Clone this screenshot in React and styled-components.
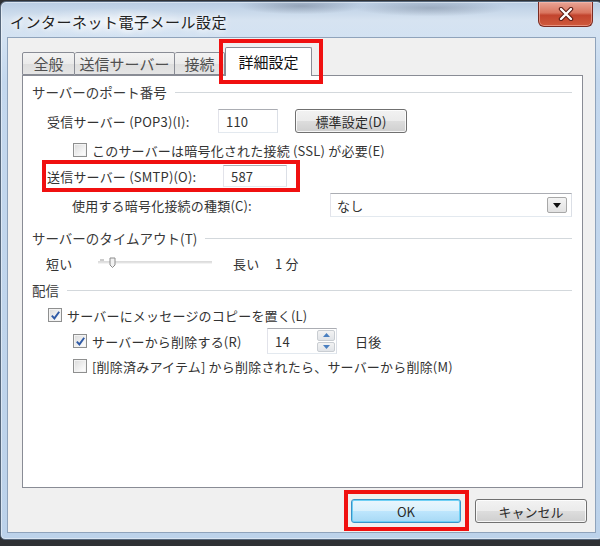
import styled, { createGlobalStyle } from "styled-components";

const GlobalStyle = createGlobalStyle`
  html, body {
    margin: 0;
    padding: 0;
    background: #2f3134;
  }
  body {
    width: 600px;
    height: 546px;
    overflow: hidden;
    font-family: "Noto Sans CJK JP", "Noto Sans", sans-serif;
    color: #333;
  }
`;

const WindowFrame = styled.div`
  box-sizing: border-box;
  width: 603px;
  height: 539px;
  margin-top: 1px;
  border: 1px solid #56677b;
  border-radius: 6px 6px 5px 5px;
  padding: 0 6px 6px 6px;
  display: flex;
  flex-direction: column;
  background:
    radial-gradient(ellipse 90px 12px at 300px 4px, rgba(70, 80, 100, 0.35), transparent 70%),
    radial-gradient(ellipse 110px 12px at 430px 6px, rgba(70, 80, 100, 0.3), transparent 70%),
    radial-gradient(ellipse 140px 20px at 110px 20px, rgba(255, 255, 255, 0.6), transparent 70%),
    linear-gradient(to bottom, #b8cce2 0, #d6e3f1 18px, #d3e2f2 36px, #c4d8ee 80px, #bcd2ea 100%);
  box-shadow: inset 0 0 0 1px rgba(255, 255, 255, 0.45);
`;

const TitleBar = styled.div`
  height: 35px;
  display: flex;
  align-items: flex-start;
  justify-content: space-between;
`;

const Title = styled.div`
  margin: 10px 0 0 3px;
  font-size: 15px;
  letter-spacing: 0.5px;
  line-height: 20px;
  color: #222;
  text-shadow: 0 0 6px #fff, 0 0 10px #fff;
`;

const CloseButton = styled.div`
  width: 55px;
  height: 25px;
  margin-right: 3px;
  box-sizing: border-box;
  border: 1px solid #7a2b22;
  border-top: none;
  border-radius: 0 0 6px 6px;
  background: linear-gradient(to bottom, #e9a596 0, #d9755f 45%, #c2442e 55%, #cf5a3c 100%);
  box-shadow: inset 0 0 0 1px rgba(255, 200, 190, 0.5);
  display: flex;
  align-items: center;
  justify-content: center;
`;

const Client = styled.div`
  flex: 1;
  box-sizing: border-box;
  background: #f0f0f0;
  border: 1px solid #8fa3bb;
  padding: 9px 8px 0 14px;
  display: flex;
  flex-direction: column;
`;

const TabStrip = styled.div`
  display: flex;
  align-items: flex-end;
  height: 29px;
  margin-bottom: -1px;
  position: relative;
  z-index: 1;
`;

const Tab = styled.div`
  position: relative;
  box-sizing: border-box;
  width: ${(p) => p.$w}px;
  height: ${(p) => (p.$active ? 29 : 23)}px;
  margin-bottom: ${(p) => (p.$active ? 0 : 1)}px;
  border: 1px solid #898c95;
  border-bottom: ${(p) => (p.$active ? "none" : "1px solid #898c95")};
  border-left-width: ${(p) => (p.$first || p.$active ? 1 : 0)}px;
  border-radius: 2px 2px 0 0;
  background: ${(p) =>
    p.$active ? "#fff" : "linear-gradient(to bottom, #f3f3f3, #ebebeb 50%, #dedede 50%, #e5e5e5)"};
  display: flex;
  align-items: center;
  justify-content: center;
  padding-bottom: ${(p) => (p.$active ? 2 : 0)}px;
  font-size: 15px;
  color: ${(p) => (p.$active ? "#111" : "#505050")};
`;

const Highlight = styled.div`
  position: relative;
  display: flex;
  align-items: center;

  &::after {
    content: "";
    position: absolute;
    left: ${(p) => p.$l}px;
    right: ${(p) => p.$r}px;
    top: ${(p) => p.$t}px;
    bottom: ${(p) => p.$b}px;
    border: 4px solid #f01010;
    pointer-events: none;
    z-index: 5;
  }
`;

const Panel = styled.div`
  box-sizing: border-box;
  height: 413px;
  margin-right: 4px;
  background: #fff;
  border: 1px solid #898c95;
  padding: 0 10px 0 9px;
  display: flex;
  flex-direction: column;
`;

const GroupHeader = styled.div`
  display: flex;
  align-items: center;
  gap: 8px;
  height: 18px;
  margin-top: ${(p) => p.$mt}px;
  font-size: 13.5px;
  color: #3a3a3a;

  &::after {
    content: "";
    flex: 1;
    height: 1px;
    background: #d3d8dc;
  }
`;

const Row = styled.div`
  display: flex;
  align-items: center;
  height: ${(p) => p.$h || 18}px;
  margin-top: ${(p) => p.$mt}px;
  padding-left: ${(p) => p.$indent || 0}px;
  font-size: 13px;
  letter-spacing: 0.2px;
`;

const Label = styled.span`
  width: ${(p) => (p.$w ? `${p.$w}px` : "auto")};
  flex-shrink: 0;
  white-space: nowrap;
  margin-left: ${(p) => p.$ml || 0}px;
`;

const TextBox = styled.div`
  box-sizing: border-box;
  width: ${(p) => p.$w}px;
  height: ${(p) => p.$h}px;
  border: 1px solid;
  border-color: #abadb3 #dbdfe6 #e3e9ef #e2e3ea;
  background: #fff;
  display: flex;
  align-items: center;
  padding-left: 7px;
  font-size: 13px;
  position: relative;
`;

const Button = styled.div`
  box-sizing: border-box;
  width: ${(p) => p.$w}px;
  height: ${(p) => p.$h || 24}px;
  margin-left: ${(p) => p.$ml || 0}px;
  border-radius: 3px;
  border: 1px solid ${(p) => (p.$default ? "#3a93c9" : "#707070")};
  background: ${(p) =>
    p.$default
      ? "linear-gradient(to bottom, #eaf6fd, #d9f0fc 50%, #bee6fd 50%, #a7d9f5)"
      : "linear-gradient(to bottom, #f2f2f2, #ebebeb 50%, #dddddd 50%, #cfcfcf)"};
  box-shadow: inset 0 0 0 1px ${(p) => (p.$default ? "#6fd0f5" : "rgba(255,255,255,0.8)")};
  display: flex;
  align-items: center;
  justify-content: center;
  font-size: 13px;
  color: #2a2a2a;
`;

const CheckBox = styled.span`
  box-sizing: border-box;
  width: 14px;
  height: 14px;
  flex-shrink: 0;
  border: 1px solid #8e8f8f;
  background: linear-gradient(135deg, #dadada, #f6f6f6 70%, #fff);
  box-shadow: inset 0 0 0 1px #f3f3f3;
  display: flex;
  align-items: center;
  justify-content: center;
  margin-right: 5px;
`;

const CheckItem = styled.div`
  display: flex;
  align-items: center;
  width: ${(p) => (p.$w ? `${p.$w}px` : "auto")};
  flex-shrink: 0;
  white-space: nowrap;
`;

const Select = styled.div`
  box-sizing: border-box;
  width: 243px;
  height: 24px;
  border: 1px solid;
  border-color: #abadb3 #dbdfe6 #e3e9ef #e2e3ea;
  background: #fff;
  display: flex;
  align-items: center;
  justify-content: space-between;
  padding: 0 4px 0 6px;
  font-size: 13px;
`;

const DropButton = styled.div`
  box-sizing: border-box;
  width: 20px;
  height: 16px;
  border: 1px solid #a8a8a8;
  border-radius: 2px;
  background: linear-gradient(to bottom, #f4f4f4, #e2e2e2);
  display: flex;
  align-items: center;
  justify-content: center;
`;

const SpinBox = styled.div`
  position: absolute;
  right: 1px;
  top: 1px;
  bottom: 1px;
  width: 18px;
  display: flex;
  flex-direction: column;
  gap: 1px;
`;

const SpinHalf = styled.div`
  flex: 1;
  box-sizing: border-box;
  border: 1px solid #c9cdd2;
  border-radius: 2px;
  background: linear-gradient(to bottom, #f3f3f3, #e1e4e8);
  display: flex;
  align-items: center;
  justify-content: center;
`;

const ButtonRow = styled.div`
  display: flex;
  justify-content: flex-end;
  margin-top: 11px;
`;

const Check = ({ checked, children, w }) => (
  <CheckItem $w={w}>
    <CheckBox>
      {checked && (
        <svg width="11" height="11" viewBox="0 0 11 11">
          <path d="M1.8 5.6 L4.4 8.4 L9.2 1.8" fill="none" stroke="#2f5aa6" strokeWidth="1.9" />
        </svg>
      )}
    </CheckBox>
    {children}
  </CheckItem>
);

const Slider = () => (
  <svg width="116" height="14" viewBox="0 0 116 14">
    <line x1="0" y1="6" x2="114" y2="6" stroke="#b9b9b9" strokeWidth="1" />
    <line x1="0" y1="7" x2="114" y2="7" stroke="#e8e8e8" strokeWidth="1" />
    <line x1="2" y1="4" x2="6" y2="4" stroke="#9a9a9a" strokeWidth="1" />
    <path d="M12 2 L17 2 L17 9 L14.5 11.5 L12 9 Z" fill="#f2f2f2" stroke="#8c8c8c" strokeWidth="1" />
  </svg>
);

const tabs = [
  { label: "全般", w: 53 },
  { label: "送信サーバー", w: 100 },
  { label: "接続", w: 50 },
];

export default function App() {
  return (
    <>
      <GlobalStyle />
      <WindowFrame>
        <TitleBar>
          <Title>インターネット電子メール設定</Title>
          <CloseButton>
            <svg width="16" height="14" viewBox="0 0 16 14">
              <path
                d="M3 2 L13 12 M13 2 L3 12"
                fill="none"
                stroke="#5a1a12"
                strokeWidth="4.4"
                strokeLinecap="round"
              />
              <path
                d="M3 2 L13 12 M13 2 L3 12"
                fill="none"
                stroke="#fff"
                strokeWidth="2.4"
                strokeLinecap="round"
              />
            </svg>
          </CloseButton>
        </TitleBar>

        <Client>
          <TabStrip>
            {tabs.map((t, i) => (
              <Tab key={t.label} $w={t.w} $first={i === 0}>
                {t.label}
              </Tab>
            ))}
            <Highlight $l={-6} $r={-11} $t={-8} $b={-8}>
              <Tab $w={87} $active>
                詳細設定
              </Tab>
            </Highlight>
          </TabStrip>

          <Panel>
            <GroupHeader $mt={7}>サーバーのポート番号</GroupHeader>

            <Row $h={24} $mt={8} $indent={15}>
              <Label $w={171}>受信サーバー (POP3)(I):</Label>
              <TextBox $w={60} $h={24}>110</TextBox>
              <Button $w={112} $ml={17}>
                標準設定(D)
              </Button>
            </Row>

            <Row $mt={8} $indent={41}>
              <Check>このサーバーは暗号化された接続 (SSL) が必要(E)</Check>
            </Row>

            <Row $h={22} $mt={6} $indent={15}>
              <Highlight $l={-5} $r={-13} $t={-5} $b={-5}>
                <Label $w={176}>送信サーバー (SMTP)(O):</Label>
                <TextBox $w={64} $h={22}>587</TextBox>
              </Highlight>
            </Row>

            <Row $h={24} $mt={6} $indent={40}>
              <Label $w={258}>使用する暗号化接続の種類(C):</Label>
              <Select>
                なし
                <DropButton>
                  <svg width="8" height="5" viewBox="0 0 8 5">
                    <path d="M0 0 L8 0 L4 5 Z" fill="#111" />
                  </svg>
                </DropButton>
              </Select>
            </Row>

            <GroupHeader $mt={12}>サーバーのタイムアウト(T)</GroupHeader>

            <Row $mt={7} $indent={14}>
              <Label $w={52}>短い</Label>
              <Slider />
              <Label $w={42} $ml={19}>
                長い
              </Label>
              <Label>1 分</Label>
            </Row>

            <GroupHeader $mt={9}>配信</GroupHeader>

            <Row $mt={7} $indent={16}>
              <Check checked>サーバーにメッセージのコピーを置く(L)</Check>
            </Row>

            <Row $h={26} $mt={4} $indent={41}>
              <Check checked w={194}>
                サーバーから削除する(R)
              </Check>
              <TextBox $w={70} $h={26}>
                14
                <SpinBox>
                  <SpinHalf>
                    <svg width="7" height="4" viewBox="0 0 7 4">
                      <path d="M0 4 L3.5 0 L7 4 Z" fill="#4a7fc0" />
                    </svg>
                  </SpinHalf>
                  <SpinHalf>
                    <svg width="7" height="4" viewBox="0 0 7 4">
                      <path d="M0 0 L7 0 L3.5 4 Z" fill="#4a7fc0" />
                    </svg>
                  </SpinHalf>
                </SpinBox>
              </TextBox>
              <Label $ml={18}>日後</Label>
            </Row>

            <Row $mt={3} $indent={41}>
              <Check>[削除済みアイテム] から削除されたら、サーバーから削除(M)</Check>
            </Row>
          </Panel>

          <ButtonRow>
            <Highlight $l={-7} $r={-8} $t={-9} $b={-8}>
              <Button $w={110} $default>
                OK
              </Button>
            </Highlight>
            <Button $w={112} $ml={14}>
              キャンセル
            </Button>
          </ButtonRow>
        </Client>
      </WindowFrame>
    </>
  );
}
